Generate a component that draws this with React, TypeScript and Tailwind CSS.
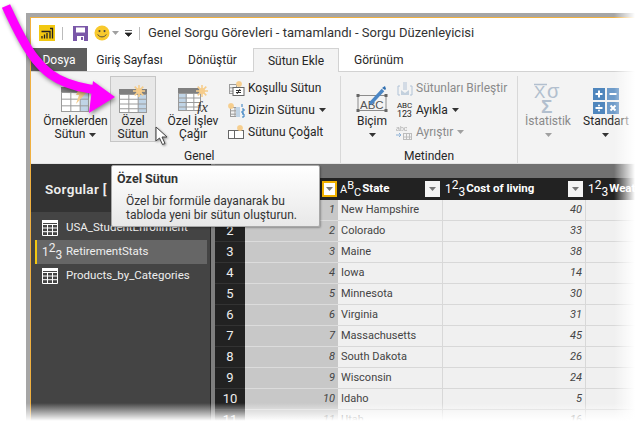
import React from "react";

const rows = [
  ["New Hampshire", 40],
  ["Colorado", 33],
  ["Maine", 38],
  ["Iowa", 14],
  ["Minnesota", 30],
  ["Virginia", 31],
  ["Massachusetts", 45],
  ["South Dakota", 26],
  ["Wisconsin", 24],
  ["Idaho", 5],
  ["Utah", 16],
] as const;

const Sun = ({ x, y, r = 6 }: { x: number; y: number; r?: number }) => (
  <g stroke="#f6cd8c" strokeWidth="1.6">
    <line x1={x - r} y1={y} x2={x + r} y2={y} />
    <line x1={x} y1={y - r} x2={x} y2={y + r} />
    <line x1={x - r * 0.72} y1={y - r * 0.72} x2={x + r * 0.72} y2={y + r * 0.72} />
    <line x1={x - r * 0.72} y1={y + r * 0.72} x2={x + r * 0.72} y2={y - r * 0.72} />
    <circle cx={x} cy={y} r={r * 0.5} fill="#f6cd8c" stroke="none" />
  </g>
);

const Caret = ({ dim }: { dim?: boolean }) => (
  <svg width="7" height="4" viewBox="0 0 7 4" className="inline-block">
    <path d="M0 0h7L3.5 4z" fill={dim ? "#a0a0a0" : "#333"} />
  </svg>
);

const Grid = ({ x, y, w, h, cols, rows: r }: { x: number; y: number; w: number; h: number; cols: number; rows: number }) => (
  <g stroke="#9a9a9a" strokeWidth="1" fill="none">
    <rect x={x + 0.5} y={y + 0.5} width={w - 1} height={h - 1} />
    {Array.from({ length: cols - 1 }, (_, i) => (
      <line key={i} x1={x + 0.5 + ((i + 1) * w) / cols} y1={y} x2={x + 0.5 + ((i + 1) * w) / cols} y2={y + h} />
    ))}
    {Array.from({ length: r - 1 }, (_, i) => (
      <line key={i} x1={x} y1={y + 0.5 + ((i + 1) * h) / r} x2={x + w} y2={y + 0.5 + ((i + 1) * h) / r} />
    ))}
  </g>
);

const ExampleIcon = () => (
  <svg width="30" height="30" viewBox="0 0 30 30">
    <rect x="0" y="3" width="28" height="5" fill="#808080" />
    <rect x="0.5" y="8" width="27" height="20" fill="#fff" />
    <rect x="19" y="8" width="9" height="20" fill="#c0d4e6" />
    <Grid x={0} y={8} w={28} h={20} cols={3} rows={3} />
    <path d="M20 0h7l-5 8h4L15 20l3-9h-3z" fill="#f6cd8c" />
  </svg>
);

const CustomColumnIcon = () => (
  <svg width="29" height="29" viewBox="0 0 29 29">
    <rect x="0" y="4" width="28" height="5" fill="#808080" />
    <rect x="0.5" y="9" width="27" height="19" fill="#fff" />
    <rect x="19" y="9" width="9" height="19" fill="#c0d4e6" />
    <Grid x={0} y={9} w={28} h={19} cols={3} rows={4} />
    <Sun x={20} y={6} />
  </svg>
);

const InvokeIcon = () => (
  <svg width="31" height="29" viewBox="0 0 31 29">
    <rect x="0" y="3" width="22" height="5" fill="#808080" />
    <rect x="0.5" y="8" width="22" height="18" fill="#fff" />
    <rect x="0" y="8" width="9" height="18" fill="#c0d4e6" />
    <Grid x={0} y={8} w={23} h={18} cols={3} rows={4} />
    <Sun x={24} y={6} />
    <text x="19" y="27" fontFamily="'Liberation Serif', serif" fontStyle="italic" fontSize="15" fill="#333">fx</text>
  </svg>
);

const SmallIcon = ({ kind }: { kind: string }) => {
  if (kind === "cond")
    return (
      <svg width="16" height="15" viewBox="0 0 16 15">
        <Grid x={0} y={3} w={8} h={10} cols={1} rows={3} />
        <rect x="4" y="6.500" width="11" height="8" fill="#fff" stroke="#666" />
        <path d="M7 9.500h5M7 11.500h5M11 8l-3 5" stroke="#333" fill="none" />
        <Sun x={10} y={3} r={3} />
      </svg>
    );
  if (kind === "index")
    return (
      <svg width="17" height="15" viewBox="0 0 17 15">
        <Grid x={2} y={4} w={9} h={10} cols={2} rows={3} />
        <rect x="8" y="4" width="4" height="10" fill="#c0d4e6" />
        <path d="M14 1v3M14 6h2v2h-2v2h2M14 11h2v3h-2" stroke="#2f7abf" fill="none" />
        <Sun x={3} y={3} r={3} />
      </svg>
    );
  return (
    <svg width="17" height="15" viewBox="0 0 17 15">
      <rect x="0.5" y="5.5" width="6" height="8" fill="#fff" stroke="#666" />
      <rect x="6.5" y="5.5" width="9" height="8" fill="#fff" stroke="#666" />
      <Sun x={12} y={3} r={3} />
    </svg>
  );
};

const FormatIcon = () => (
  <svg width="32" height="28" viewBox="0 0 32 28">
    <rect x="2" y="9.5" width="28" height="15" fill="none" stroke="#8c8c8c" />
    <g fill="#666">
      <rect x="0.5" y="8" width="3" height="3" />
      <rect x="28.5" y="8" width="3" height="3" />
      <rect x="0.5" y="23" width="3" height="3" />
      <rect x="28.5" y="23" width="3" height="3" />
    </g>
    <text x="4" y="22.5" fontFamily="'Liberation Sans', sans-serif" fontSize="11.5" fill="#555">ABC</text>
    <path d="M14 18L27 4" stroke="#4a86c5" strokeWidth="3.4" />
    <path d="M26 2l3-2 1 3-1 1z" fill="#2f6fb0" />
  </svg>
);

const MergeIcon = () => (
  <svg width="16" height="15" viewBox="0 0 16 15" opacity="0.55">
    <path d="M3 5H1v9h2M13 5h2v9h-2" fill="none" stroke="#7d9cc0" />
    <rect x="6" y="1" width="4" height="8" fill="#b9c9da" />
    <path d="M4 9l4 3 4-3v5H4z" fill="#9db4cc" />
  </svg>
);

const SplitIcon = () => (
  <svg width="17" height="15" viewBox="0 0 17 15" opacity="0.6">
    <text x="0" y="6" fontFamily="'Liberation Sans', sans-serif" fontSize="7" fill="#777">abc</text>
    <path d="M0 10h5M3 8l2 2-2 2" stroke="#4a86c5" fill="none" />
    <Grid x={7} y={8} w={9} h={7} cols={3} rows={2} />
  </svg>
);

const StatsIcon = () => (
  <svg width="30" height="32" viewBox="0 0 30 32">
    <path d="M1 2.500h13" stroke="#b2bfce" strokeWidth="1.500" />
    <g fontFamily="'Liberation Sans', sans-serif" fill="#b2bfce">
      <text x="1" y="16" fontSize="17">X</text>
      <text x="14" y="16" fontSize="20">σ</text>
      <text x="8" y="31" fontSize="19" fontWeight="bold">Σ</text>
    </g>
  </svg>
);

const StandardIcon = () => (
  <svg width="26" height="26" viewBox="0 0 26 26">
    <rect width="12" height="12" fill="#4f86bd" />
    <rect x="14" width="12" height="12" fill="#6e9bc9" />
    <rect y="14" width="12" height="12" fill="#4f86bd" />
    <rect x="14" y="14" width="12" height="12" fill="#6e9bc9" />
    <path d="M2.500 6h7M6 2.500v7M16.500 6h7M2.500 20h7" stroke="#fff" strokeWidth="2" />
    <circle cx="6" cy="17.500" r="1" fill="#fff" />
    <circle cx="6" cy="22.500" r="1" fill="#fff" />
    <path d="M17.500 17.500l5 5M22.500 17.500l-5 5" stroke="#fff" strokeWidth="2" />
  </svg>
);

const TableGlyph = () => (
  <svg width="16" height="16" viewBox="0 0 16 16">
    <path d="M.5.500h15v15H.5zM.5 4.500h15M.5 8h15M.5 11.700h15M5.500 4.500v11M10.500 4.500v11" fill="none" stroke="#fff" />
    <rect width="16" height="3" fill="#fff" />
  </svg>
);

const Type123 = () => (
  <span className="text-[12px] leading-none whitespace-nowrap">
    1<span className="align-[4px]">2</span>
    <span className="align-[-3px]">3</span>
  </span>
);

const TypeABC = () => (
  <span className="text-[11px] leading-none whitespace-nowrap">
    A<span className="align-[4px]">B</span>
    <span className="align-[-3px]">C</span>
  </span>
);

const FilterBtn = ({ active }: { active?: boolean }) => (
  <span
    className={`flex h-[16px] w-[15px] shrink-0 items-center justify-center ${
      active ? "border-2 border-[#f0b000] bg-white" : "bg-[#f4f4f4]"
    }`}
  >
    <svg width="7" height="4" viewBox="0 0 7 4">
      <path d="M0 0h7L3.500 4z" fill="#777" />
    </svg>
  </span>
);

const LargeBtn = ({
  icon,
  lines,
  caret,
  dim,
  className,
}: {
  icon: React.ReactNode;
  lines: string[];
  caret?: boolean;
  dim?: boolean;
  className: string;
}) => (
  <div className={`flex shrink-0 flex-col items-center ${className} ${dim ? "text-[#8a8a8a]" : "text-[#262626]"}`}>
    <div className="flex h-[37px] items-end justify-center">{icon}</div>
    <div className="mt-[1px] flex flex-col items-center text-[12px] leading-[13px] whitespace-nowrap">
      {lines.map((l, i) => (
        <span key={l} className="flex h-[13px] items-center gap-1">
          {l}
          {caret && i === lines.length - 1 && <Caret dim={dim} />}
        </span>
      ))}
    </div>
  </div>
);

const SmallBtn = ({
  icon,
  label,
  caret,
  dim,
}: {
  icon: React.ReactNode;
  label: string;
  caret?: boolean;
  dim?: boolean;
}) => (
  <div className={`flex h-[22px] items-center gap-[3px] text-[12px] whitespace-nowrap ${dim ? "text-[#8a8a8a]" : "text-[#262626]"}`}>
    <span className="flex w-[17px] shrink-0 justify-center">{icon}</span>
    <span className="flex items-center gap-1">
      {label}
      {caret && <Caret dim={dim} />}
    </span>
  </div>
);

const Group = ({
  label,
  className,
  labelClass,
  children,
}: {
  label: string;
  className: string;
  labelClass: string;
  children: React.ReactNode;
}) => (
  <div className={`flex h-full shrink-0 flex-col border-r border-[#d8d8d8] ${className}`}>
    <div className="flex h-[73px] items-start">{children}</div>
    <div className={`text-[12px] leading-[14px] text-[#262626] ${labelClass}`}>{label}</div>
  </div>
);

export default function App() {
  return (
    <div className="relative h-[424px] w-[644px] overflow-hidden bg-white pt-[13px] pl-[26px] font-['Roboto','Noto_Sans',sans-serif]">
      <div className="flex h-[411px] w-[640px] flex-col overflow-hidden border-t-[4px] border-l-[4px] border-[#a6a6a6]">
        <div className="flex h-full flex-col border-t border-l border-[#f0b040]">
          {/* quick access + title */}
          <div className="flex h-[30px] shrink-0 items-center bg-white pl-[8px] text-[#333]">
            <svg width="16" height="16" viewBox="0 0 16 16" className="shrink-0">
              <rect width="16" height="16" fill="#f2c811" />
              <path d="M2.500 6.500h8.500v7M11 3.500h2.500v10M8 8v5.500M5.500 9.500v4M3 11v2.500" fill="none" stroke="#222" strokeWidth="1.300" />
            </svg>
            <span className="ml-[7px] h-[13px] w-px bg-[#bbb]" />
            <svg width="15" height="15" viewBox="0 0 15 15" className="ml-[10px] shrink-0">
              <rect width="15" height="15" fill="#7a57a8" />
              <rect x="3" y="1.500" width="9" height="5" fill="#fff" />
              <rect x="4" y="10" width="7" height="5" fill="#fff" />
              <rect x="8" y="11" width="2" height="3" fill="#7a57a8" />
            </svg>
            <svg width="16" height="16" viewBox="0 0 17 17" className="ml-[6px] shrink-0">
              <circle cx="8.500" cy="8.500" r="8" fill="#f8c92c" />
              <circle cx="5.800" cy="6.500" r="1.100" fill="#444" />
              <circle cx="11.200" cy="6.500" r="1.100" fill="#444" />
              <path d="M4 10c1.500 3.500 7.500 3.500 9 0" fill="none" stroke="#444" />
            </svg>
            <span className="ml-[2px] flex items-center">
              <Caret dim />
            </span>
            <svg width="7" height="7" viewBox="0 0 7 7" className="ml-[6px] shrink-0">
              <path d="M0 .500h7M0 3h7L3.500 6.500z" fill="#222" stroke="#222" strokeWidth="0.700" />
            </svg>
            <span className="ml-[7px] h-[13px] w-px bg-[#bbb]" />
            <span className="ml-[8px] text-[13px] whitespace-nowrap">Genel Sorgu Görevleri - tamamlandı - Sorgu Düzenleyicisi</span>
          </div>

          {/* tabs */}
          <div className="flex h-[24px] shrink-0 items-stretch border-b border-[#d2d2d2] bg-white text-[12px] text-[#262626]">
            <div className="flex w-[56px] items-center justify-center bg-[#5e5e5e] text-white">Dosya</div>
            <div className="flex w-[85px] items-center justify-center">Giriş Sayfası</div>
            <div className="flex w-[81px] items-center justify-center">Dönüştür</div>
            <div className="z-10 -mb-px flex w-[86px] items-center justify-center border-x border-t border-[#d2d2d2] bg-[#f3f3f3]">
              Sütun Ekle
            </div>
            <div className="ml-[15px] flex items-center">Görünüm</div>
          </div>

          {/* ribbon */}
          <div className="flex h-[92px] shrink-0 border-b border-[#e4e4e4] bg-[#f3f3f3] pt-[4px]">
            <Group label="Genel" className="w-[310px]" labelClass="pl-[153px]">
              <LargeBtn icon={<ExampleIcon />} lines={["Örneklerden", "Sütun"]} caret className="ml-[10px] w-[69px] pt-[1px]" />
              <LargeBtn
                icon={<CustomColumnIcon />}
                lines={["Özel", "Sütun"]}
                className="h-[66px] w-[46px] border border-[#c6c6c6] bg-[#e8e8e8]"
              />
              <LargeBtn icon={<InvokeIcon />} lines={["Özel İşlev", "Çağır"]} className="ml-[11px] w-[52px] pt-[1px]" />
              <div className="ml-[9px] flex flex-col pt-[1px]">
                <SmallBtn icon={<SmallIcon kind="cond" />} label="Koşullu Sütun" />
                <SmallBtn icon={<SmallIcon kind="index" />} label="Dizin Sütunu" caret />
                <SmallBtn icon={<SmallIcon kind="dup" />} label="Sütunu Çoğalt" />
              </div>
            </Group>
            <Group label="Metinden" className="w-[177px]" labelClass="text-center">
              <LargeBtn icon={<FormatIcon />} lines={["Biçim", ""]} caret className="ml-[13px] w-[36px] pt-[1px]" />
              <div className="ml-[6px] flex flex-col pt-[1px]">
                <SmallBtn icon={<MergeIcon />} label="Sütunları Birleştir" dim />
                <SmallBtn
                  icon={
                    <span className="flex flex-col text-[8px] leading-[8px] tracking-tight">
                      <span>ABC</span>
                      <span className="text-[9px]">123</span>
                    </span>
                  }
                  label="Ayıkla"
                  caret
                />
                <SmallBtn icon={<SplitIcon />} label="Ayrıştır" caret dim />
              </div>
            </Group>
            <LargeBtn icon={<StatsIcon />} lines={["İstatistik", ""]} caret dim className="ml-[7px] w-[46px] pt-[1px]" />
            <LargeBtn icon={<StandardIcon />} lines={["Standart", ""]} caret className="ml-[10px] w-[50px] pt-[1px]" />
          </div>

          {/* body */}
          <div className="flex min-h-0 flex-1 bg-[#7f7f7f]">
            <aside className="flex w-[180px] shrink-0 flex-col border-r border-[#222] bg-[#444]">
              <div className="flex h-[48px] shrink-0 items-center bg-[#333] pt-[3px] pl-[14px] text-[13.500px] font-semibold tracking-wide text-[#eee] whitespace-nowrap">
                Sorgular [
              </div>
              <div className="flex flex-col pt-[4px] text-[11.500px] text-[#eee]">
                <div className="flex h-[24px] items-center pl-[11px]">
                  <TableGlyph />
                  <span className="ml-[8px]">USA_StudentEnrollment</span>
                </div>
                <div className="mr-[3px] ml-[4px] flex h-[24px] items-center border-l-[2px] border-[#f2c811] bg-[#666] pl-[5px]">
                  <span className="w-[16px]">
                    <Type123 />
                  </span>
                  <span className="ml-[8px]">RetirementStats</span>
                </div>
                <div className="flex h-[24px] items-center pl-[11px]">
                  <TableGlyph />
                  <span className="ml-[8px]">Products_by_Categories</span>
                </div>
              </div>
            </aside>

            <main className="ml-[4px] flex min-w-0 flex-1 flex-col">
              <div className="h-[14px] shrink-0 bg-[#717171]" />
              <div className="flex h-[22px] shrink-0 items-center bg-[#222] text-[11.500px] font-bold text-white">
                <div className="w-[30px] shrink-0" />
                <div className="flex w-[93px] shrink-0 justify-end pr-[1px]">
                  <FilterBtn active />
                </div>
                <div className="flex w-[105px] shrink-0 items-center pl-[2px] font-bold">
                  <span className="font-normal">
                    <TypeABC />
                  </span>
                  <span className="ml-[1px] flex-1">State</span>
                  <span className="mr-[3px]">
                    <FilterBtn />
                  </span>
                </div>
                <div className="flex w-[143px] shrink-0 items-center pl-[2px]">
                  <span className="font-normal">
                    <Type123 />
                  </span>
                  <span className="ml-[1px] flex-1">Cost of living</span>
                  <span className="mr-[3px]">
                    <FilterBtn />
                  </span>
                </div>
                <div className="flex items-center pl-[2px] whitespace-nowrap">
                  <span className="font-normal">
                    <Type123 />
                  </span>
                  <span className="ml-[1px]">Weather</span>
                </div>
              </div>
              {rows.map(([state, value], i) => (
                <div key={state} className="flex h-[21px] shrink-0 text-[11px] text-[#444]">
                  <div className="flex w-[30px] shrink-0 items-center justify-center border-b border-[#333] bg-[#222] text-[13px] text-[#eee]">
                    {i + 1}
                  </div>
                  <div className="flex w-[93px] shrink-0 items-center justify-end border-b border-[#dcdcdc] bg-[#c8c8c8] pr-[3px] italic">
                    {i + 1}
                  </div>
                  <div className="flex w-[105px] shrink-0 items-center border-r border-b border-[#d8d8d8] bg-[#f0f0f0] pl-[3px]">
                    {state}
                  </div>
                  <div className="flex w-[143px] shrink-0 items-center justify-end border-r border-b border-[#d8d8d8] bg-[#f0f0f0] pr-[3px] italic">
                    {value}
                  </div>
                  <div className="flex-1 border-b border-[#d8d8d8] bg-[#f0f0f0]" />
                </div>
              ))}
            </main>
          </div>
        </div>
      </div>

      {/* torn edges */}
      <div className="absolute top-0 right-0 h-full w-[30px] bg-gradient-to-r from-transparent to-white to-70%" />
      <div className="absolute inset-x-0 bottom-0 h-[21px] bg-gradient-to-b from-transparent to-white to-85%" />

      {/* tooltip */}
      <div className="absolute top-[165px] left-[111px] h-[62px] w-[209px] rounded-[2px] border border-[#a8a8a8] bg-gradient-to-b from-white to-[#e8e8e8] pt-[5px] pl-[5px] text-[12px] text-[#333] shadow-[1px_1px_2px_rgba(0,0,0,0.3)]">
        <div className="text-[12.500px] leading-[15px] font-bold">Özel Sütun</div>
        <div className="mt-[8px] ml-[9px] leading-[14px]">
          Özel bir formüle dayanarak bu
          <br />
          tabloda yeni bir sütun oluşturun.
        </div>
      </div>

      {/* pointer */}
      <svg width="14" height="21" viewBox="0 0 14 21" className="absolute top-[126px] left-[155px] drop-shadow-[1px_1px_1px_rgba(0,0,0,0.4)]">
        <path d="M1 1v14l3.500-3 3 6.500 2.500-1-3-6.500h5z" fill="#fff" stroke="#444" />
      </svg>

      {/* callout arrow */}
      <svg width="120" height="115" viewBox="0 0 120 115" className="absolute top-0 left-0 drop-shadow-[1px_2px_2px_rgba(0,0,0,0.45)]">
        <path d="M6 6C16 28 26 48 36 60S54 78 67 83S85 88 96 90" fill="none" stroke="#ff00ff" strokeWidth="9" />
        <path d="M93 81l22 16-26 16z" fill="#ff00ff" />
      </svg>
    </div>
  );
}
